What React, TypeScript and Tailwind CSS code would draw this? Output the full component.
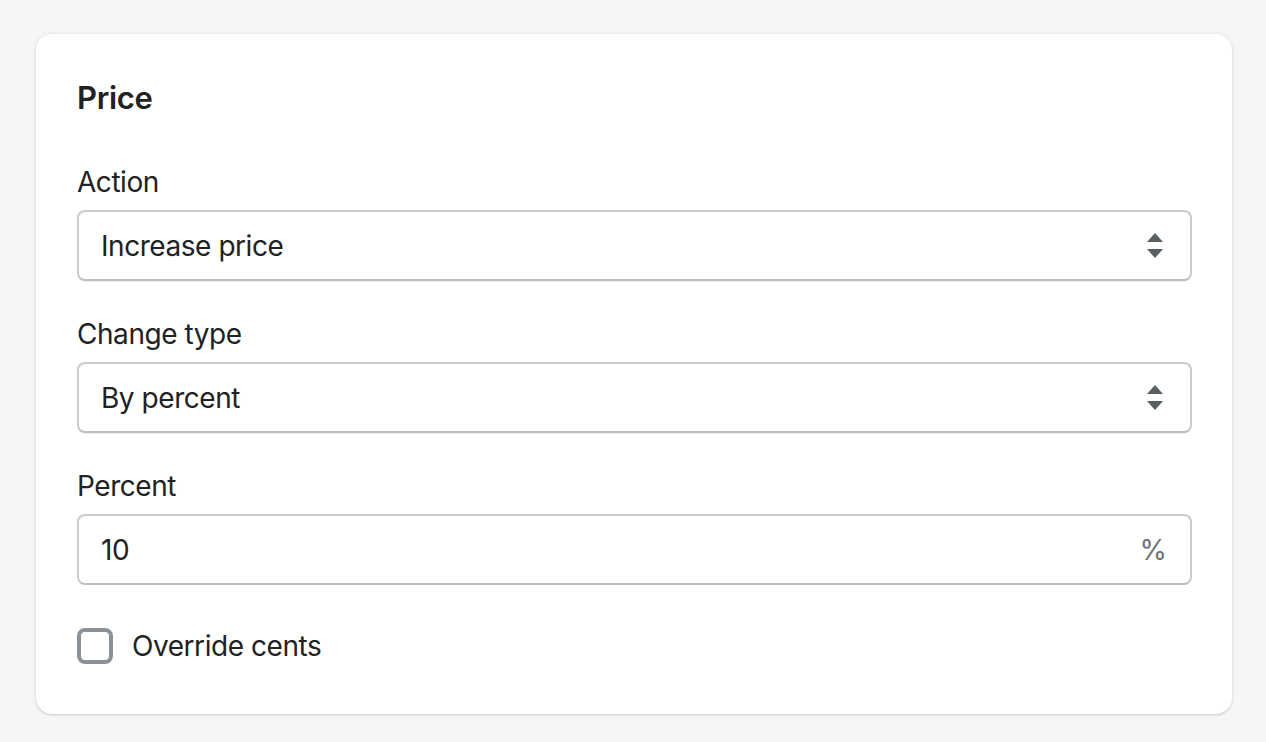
import { useState } from 'react'

function SelectArrows() {
    return (
        <svg width="16" height="26" viewBox="0 0 16 26" className="shrink-0">
            <path d="M8 0 L16 9 L0 9 Z" fill="#5c5f62" />
            <path d="M0 16 L16 16 L8 25 Z" fill="#5c5f62" />
        </svg>
    )
}

function SelectField({ label, value }: { label: string, value: string }) {
    return (
        <div className="flex flex-col">
            <label className="text-[28px] leading-[40px] tracking-[-0.45px] text-[#202223]">{label}</label>
            <div className="mt-[8px] h-[71px] flex items-center justify-between pl-[22px] pr-[27px] rounded-[8px] border-2 border-[#c9cccf] border-b-[#babfc3] bg-white shadow-[0_1px_0_rgba(0,0,0,0.05)]">
                <span className="text-[28px] tracking-[-0.45px] text-[#202223]">{value}</span>
                <SelectArrows />
            </div>
        </div>
    )
}

export default function App() {
    const [percent, setPercent] = useState('10')
    const [overrideCents, setOverrideCents] = useState(false)

    return (
        <div className="min-h-[742px] bg-[#f6f6f7] pt-[34px] pl-[36px] pb-[28px] font-['Inter','Liberation_Sans',sans-serif]">
            <div className="w-[1196px] rounded-[16px] bg-white pl-[41px] pr-[40px] pt-[40px] pb-[48px] shadow-[0_0_5px_rgba(23,24,24,0.08),0_1px_2px_rgba(0,0,0,0.15)]">
                <h2 className="text-[31px] leading-[48px] font-semibold tracking-[-0.3px] text-[#202223]">Price</h2>

                <div className="mt-[40px] flex flex-col gap-[33px]">
                    <SelectField label="Action" value="Increase price" />
                    <SelectField label="Change type" value="By percent" />

                    <div className="flex flex-col">
                        <label className="text-[28px] leading-[40px] tracking-[-0.45px] text-[#202223]">Percent</label>
                        <div className="mt-[8px] h-[71px] flex items-center pl-[22px] pr-[23px] rounded-[8px] border-2 border-[#c9cccf] border-b-[#babfc3] bg-white">
                            <input
                                value={percent}
                                onChange={e => setPercent(e.target.value)}
                                className="flex-1 min-w-0 bg-transparent outline-none text-[28px] tracking-[-0.45px] text-[#202223]"
                            />
                            <span className="text-[28px] text-[#6d7175]">%</span>
                        </div>
                    </div>

                    <label className="mt-[8px] flex items-center gap-[19px] cursor-pointer">
                        <button
                            type="button"
                            onClick={() => setOverrideCents(!overrideCents)}
                            className="shrink-0 w-[36px] h-[36px] rounded-[8px] border-[4px] border-[#8c9196] bg-white"
                        />
                        <span className="text-[28px] leading-[40px] tracking-[-0.45px] text-[#202223]">Override cents</span>
                    </label>
                </div>
            </div>
        </div>
    )
}
